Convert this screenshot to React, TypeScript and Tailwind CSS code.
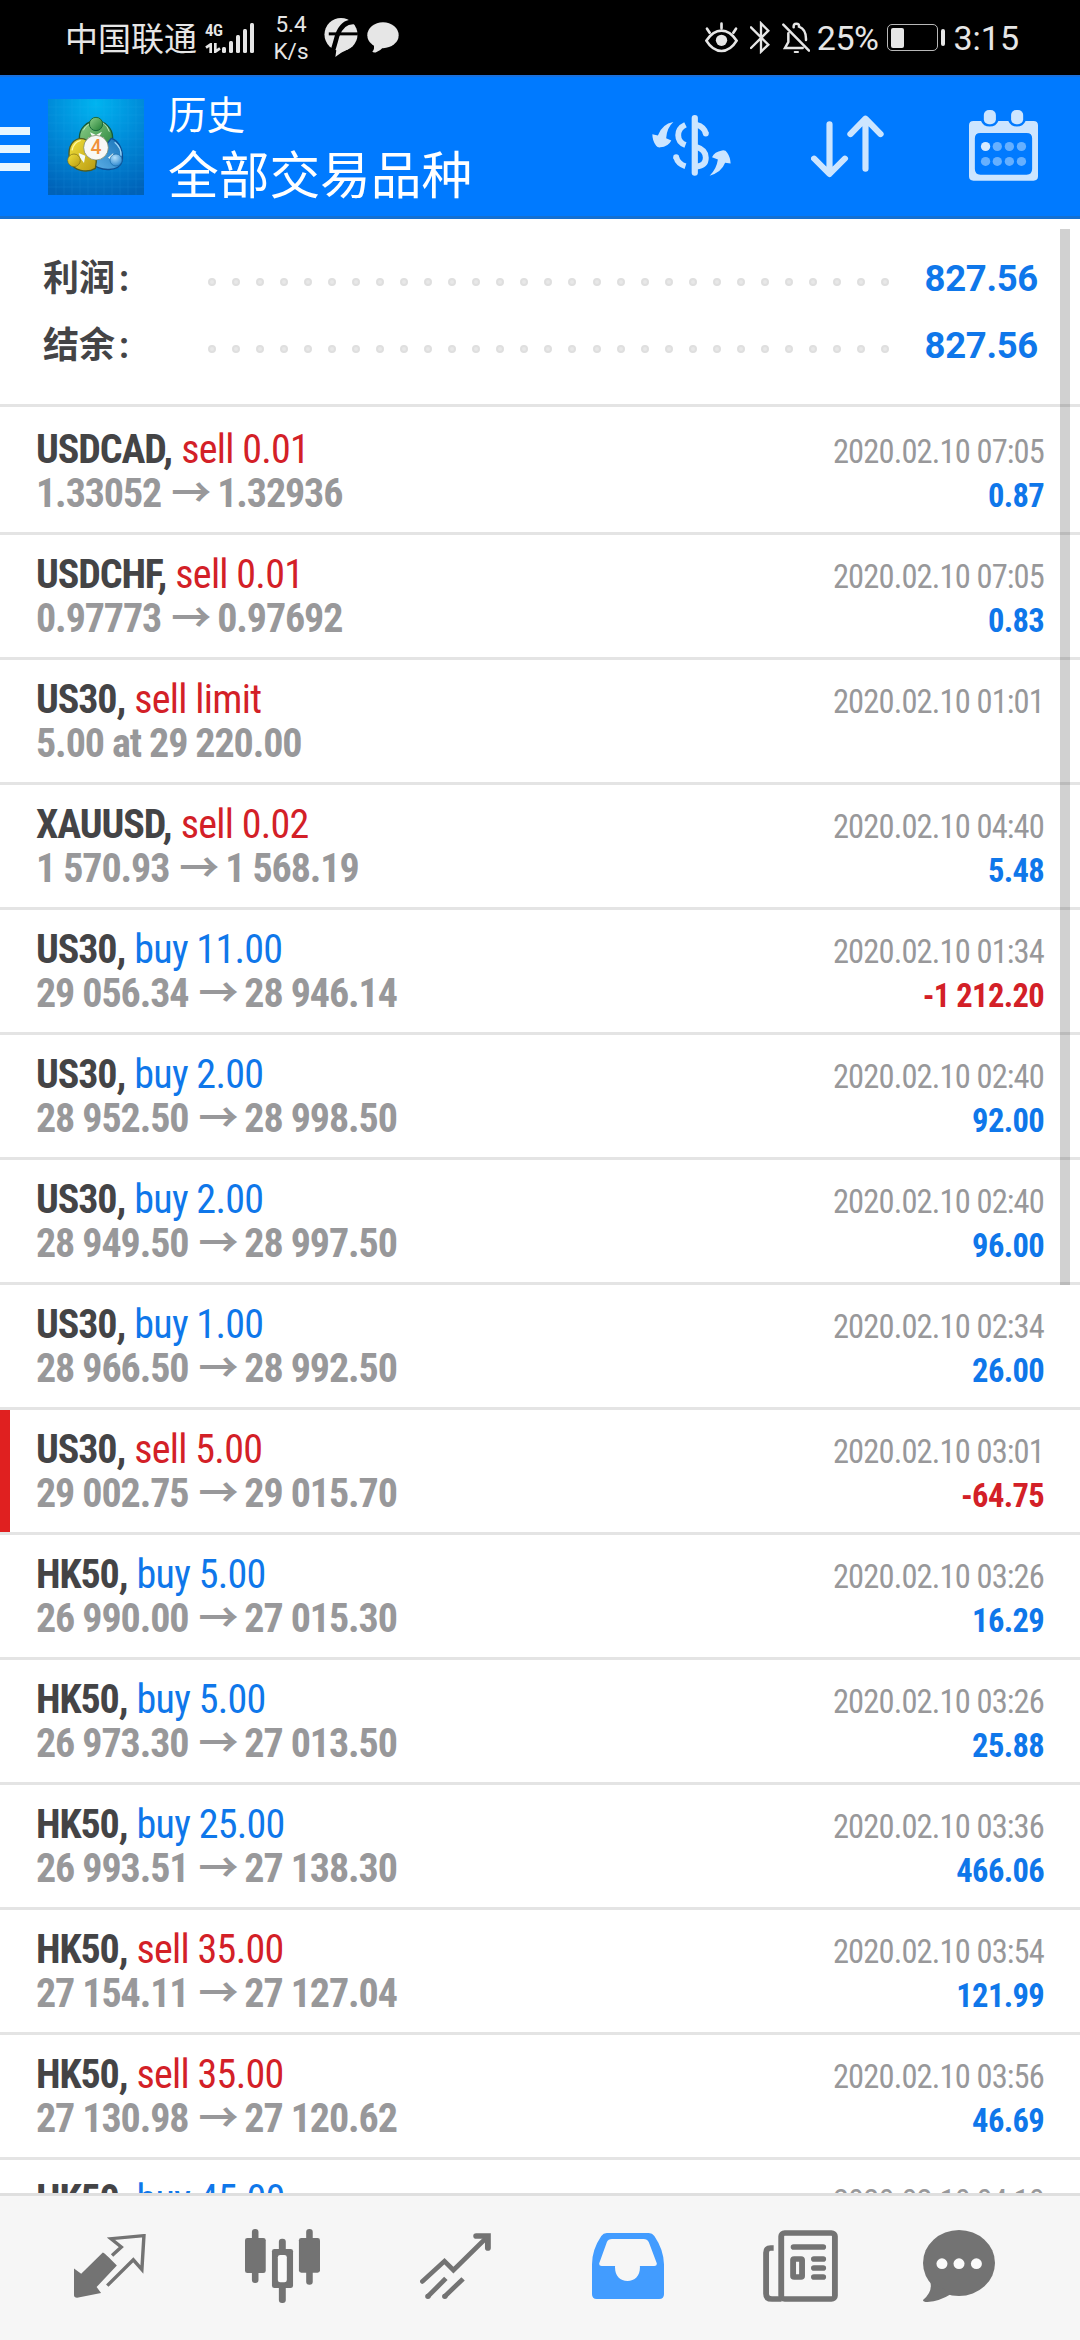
import type { ReactNode } from "react";

type Deal = {
  symbol: string;
  side: "buy" | "sell";
  label: string;
  from?: string;
  to?: string;
  note?: string;
  time: string;
  profit?: string;
  marked?: boolean;
};

const deals: Deal[] = [
  { symbol: "USDCAD", side: "sell", label: "sell 0.01", from: "1.33052", to: "1.32936", time: "2020.02.10 07:05", profit: "0.87" },
  { symbol: "USDCHF", side: "sell", label: "sell 0.01", from: "0.97773", to: "0.97692", time: "2020.02.10 07:05", profit: "0.83" },
  { symbol: "US30", side: "sell", label: "sell limit", note: "5.00 at 29 220.00", time: "2020.02.10 01:01" },
  { symbol: "XAUUSD", side: "sell", label: "sell 0.02", from: "1 570.93", to: "1 568.19", time: "2020.02.10 04:40", profit: "5.48" },
  { symbol: "US30", side: "buy", label: "buy 11.00", from: "29 056.34", to: "28 946.14", time: "2020.02.10 01:34", profit: "-1 212.20" },
  { symbol: "US30", side: "buy", label: "buy 2.00", from: "28 952.50", to: "28 998.50", time: "2020.02.10 02:40", profit: "92.00" },
  { symbol: "US30", side: "buy", label: "buy 2.00", from: "28 949.50", to: "28 997.50", time: "2020.02.10 02:40", profit: "96.00" },
  { symbol: "US30", side: "buy", label: "buy 1.00", from: "28 966.50", to: "28 992.50", time: "2020.02.10 02:34", profit: "26.00" },
  { symbol: "US30", side: "sell", label: "sell 5.00", from: "29 002.75", to: "29 015.70", time: "2020.02.10 03:01", profit: "-64.75", marked: true },
  { symbol: "HK50", side: "buy", label: "buy 5.00", from: "26 990.00", to: "27 015.30", time: "2020.02.10 03:26", profit: "16.29" },
  { symbol: "HK50", side: "buy", label: "buy 5.00", from: "26 973.30", to: "27 013.50", time: "2020.02.10 03:26", profit: "25.88" },
  { symbol: "HK50", side: "buy", label: "buy 25.00", from: "26 993.51", to: "27 138.30", time: "2020.02.10 03:36", profit: "466.06" },
  { symbol: "HK50", side: "sell", label: "sell 35.00", from: "27 154.11", to: "27 127.04", time: "2020.02.10 03:54", profit: "121.99" },
  { symbol: "HK50", side: "sell", label: "sell 35.00", from: "27 130.98", to: "27 120.62", time: "2020.02.10 03:56", profit: "46.69" },
  { symbol: "HK50", side: "buy", label: "buy 45.00", time: "2020.02.10 04:10" },
];

const summary = [
  { label: "利润", value: "827.56" },
  { label: "结余", value: "827.56" },
];

function StatusBar() {
  return (
    <div className="flex h-[75px] shrink-0 items-center bg-black pr-[61px] pl-[65px] text-[#e6e6e6]">
      <span className="font-['Noto_Sans_CJK_SC',sans-serif] text-[33px] leading-none">中国联通</span>
      <div className="ml-2 flex h-[30px] w-[17px] flex-col justify-between">
        <span className="font-['Roboto_Condensed',Roboto,sans-serif] text-[17px] leading-[14px] font-semibold tracking-[-0.500px]">4G</span>
        <svg width="16" height="10" viewBox="0 0 46 30" fill="none" stroke="currentColor" strokeWidth="8">
          <path d="M16 30V4L2 14M30 0v26l14-10" />
        </svg>
      </div>
      <svg width="33" height="30" viewBox="0 0 33 30" fill="currentColor">
        <rect x="0" y="24" width="4" height="6" rx="1.5" />
        <rect x="7" y="18" width="4" height="12" rx="1.5" />
        <rect x="14" y="12" width="4" height="18" rx="1.5" />
        <rect x="21" y="6" width="4" height="24" rx="1.5" />
        <rect x="28" y="0" width="4" height="30" rx="1.5" />
      </svg>
      <div className="ml-[18px] w-9 pt-px text-center font-[Roboto,sans-serif] text-[22.500px] leading-[27px]">
        <div>5.4</div>
        <div>K/s</div>
      </div>
      <svg className="ml-[15px]" width="34" height="39" viewBox="0 0 102 118" fill="currentColor">
        <circle cx="51" cy="50" r="50" />
        <path d="M42 60L34 118C50 104 62 100 76 92Z" />
        <path d="M94 12C62 8 48 30 40 52C34 72 30 92 20 116" fill="none" stroke="#000" strokeWidth="14" />
        <path d="M14 48H102" stroke="#000" strokeWidth="9" />
      </svg>
      <svg className="ml-[9px]" width="32" height="31" viewBox="0 0 96 92" fill="currentColor">
        <ellipse cx="48" cy="39" rx="47" ry="39" />
        <path d="M20 66Q24 80 16 88Q18 92 26 91Q40 86 48 76Z" />
      </svg>

      <svg className="ml-auto" width="33" height="31" viewBox="36 35 99 93" fill="none" stroke="currentColor" strokeWidth="8" strokeLinecap="round">
        <path d="M40 91Q60 61 85.500 61T131 91Q112 122 85.500 122T40 91Z" strokeLinejoin="round" />
        <circle cx="85.500" cy="90" r="17" fill="currentColor" stroke="none" />
        <path d="M85.500 40v14M42 55l8 12M129 55l-8 12" />
      </svg>
      <svg className="ml-[12px]" width="20" height="33" viewBox="170 31 60 99" fill="none" stroke="currentColor" strokeWidth="7" strokeLinecap="round">
        <path d="M173 50L225 102L203 123V38L225 60L173 112" />
      </svg>
      <svg className="ml-[12px]" width="28" height="32" viewBox="266 34 84 96" fill="none" stroke="currentColor" strokeWidth="7.500" strokeLinecap="round">
        <path d="M270 42L347 120M285 68V94L275 112H328M301 50Q300 39 309 39T317 48Q339 56 338 88" />
        <path d="M304 124H314" strokeWidth="6" />
      </svg>
      <span className="ml-[7px] font-[Roboto,sans-serif] text-[34px] leading-none tracking-[-0.5px]">25%</span>
      <div className="ml-[9px] flex h-[27px] w-[51px] items-center rounded-[5px] border-[1.5px] border-[#b8b8b8] pl-[3px]">
        <div className="h-5 w-[13px] rounded-[2px] bg-[#e6e6e6]" />
      </div>
      <div className="ml-[3px] h-[17px] w-1 rounded-[2px] bg-[#e6e6e6]" />
      <span className="ml-[8px] font-[Roboto,sans-serif] text-[34px] leading-none">3:15</span>
    </div>
  );
}

function AppLogo() {
  return (
    <svg className="ml-[18px] shrink-0" width="96" height="96" viewBox="24 24 288 288">
      <defs>
        <radialGradient id="sky" cx="0.5" cy="0.05" r="1">
          <stop offset="0" stopColor="#00b4f0" />
          <stop offset="0.500" stopColor="#008ad8" />
          <stop offset="1" stopColor="#0062b8" />
        </radialGradient>
        <linearGradient id="green" x1="0" y1="0" x2="1" y2="1">
          <stop offset="0" stopColor="#8fd08a" />
          <stop offset="1" stopColor="#1e7d34" />
        </linearGradient>
        <linearGradient id="yellow" x1="0" y1="0" x2="1" y2="1">
          <stop offset="0" stopColor="#f2e23c" />
          <stop offset="1" stopColor="#b99a12" />
        </linearGradient>
        <linearGradient id="blue" x1="1" y1="0" x2="0" y2="1">
          <stop offset="0" stopColor="#1672b8" />
          <stop offset="1" stopColor="#62b4ea" />
        </linearGradient>
        <radialGradient id="ball" cx="0.4" cy="0.3" r="0.8">
          <stop offset="0" stopColor="#b4e0fa" />
          <stop offset="1" stopColor="#2080cc" />
        </radialGradient>
      </defs>
      <rect x="24" y="24" width="288" height="288" fill="url(#sky)" />
      <path
        d="M48 24v288M72 24v288M96 24v288M120 24v288M144 24v288M168 24v288M192 24v288M216 24v288M240 24v288M264 24v288M288 24v288M24 48h288M24 72h288M24 96h288M24 120h288M24 144h288M24 168h288M24 192h288M24 216h288M24 240h288M24 264h288M24 288h288"
        stroke="#3cc4ff"
        strokeOpacity="0.150"
        strokeWidth="2"
      />
      <circle cx="168" cy="140" r="50" fill="url(#green)" stroke="#155a3a" strokeWidth="4" />
      <path d="M214 142C238 150 252 180 246 212C238 240 184 246 150 214L176 190Z" fill="url(#blue)" stroke="#0d4f94" strokeWidth="4" />
      <path d="M120 142C150 142 178 180 166 232C140 248 100 238 92 214C80 180 90 148 120 142Z" fill="url(#yellow)" stroke="#4f5c20" strokeWidth="4" />
      <path d="M130 118Q140 96 168 92T208 122" fill="none" stroke="#c4e8c0" strokeWidth="3" />
      <path d="M96 178Q100 154 122 148" fill="none" stroke="#fff8a0" strokeWidth="4" />
      <path d="M224 154Q244 170 243 194" fill="none" stroke="#9cd4f6" strokeWidth="4" />
      <path d="M150 124L168 132L186 122L176 140H158ZM116 186L136 194L132 216L120 200ZM204 200L220 186L216 208Z" fill="#f4fbf4" />
      <circle cx="168" cy="99" r="20" fill="url(#green)" stroke="#1a6a3c" strokeWidth="3" />
      <circle cx="102" cy="208" r="19" fill="url(#yellow)" stroke="#7a6a14" strokeWidth="2" />
      <circle cx="228" cy="207" r="18" fill="url(#ball)" stroke="#1768a8" strokeWidth="2" />
      <circle cx="168" cy="170" r="37" fill="#f8f8f6" stroke="#6c7c5c" strokeWidth="2" />
      <text x="168" y="190" textAnchor="middle" fontFamily="Roboto, sans-serif" fontSize="58" fontWeight="500" fill="#f0913a">
        4
      </text>
    </svg>
  );
}

function Header() {
  return (
    <header className="flex h-[144px] shrink-0 items-center border-t-2 border-b-[3px] border-t-[#1a70dc] border-b-[#1470d2] bg-[#007aff] pr-[42px]">
      <div className="flex flex-col gap-[10px] pt-[5px]">
        <div className="h-2 w-[30px] bg-[#e8f6ff]" />
        <div className="h-2 w-[30px] bg-[#e8f6ff]" />
        <div className="h-2 w-[30px] bg-[#e8f6ff]" />
      </div>
      <AppLogo />
      <div className="ml-6 pb-[9px] font-['Noto_Sans_CJK_SC',sans-serif] text-white">
        <div className="text-[38.500px] leading-[60px]">历史</div>
        <div className="text-[50.700px] leading-[60px]">全部交易品种</div>
      </div>

      <svg className="mb-[3px] ml-auto" width="79" height="61" viewBox="321 345 229 181" preserveAspectRatio="none" fill="#cce5ff">
        <rect x="436" y="345" width="18" height="180" rx="9" />
        <path d="M418 374Q397 384 397 405T418 434M391 470Q396 490 418 497" fill="none" stroke="#cce5ff" strokeWidth="17" />
        <circle cx="391" cy="470" r="8.500" />
        <path d="M450 374Q472 380 477 400M450 440Q477 448 477 472T450 498" fill="none" stroke="#cce5ff" strokeWidth="17" />
        <circle cx="477" cy="400" r="8.500" />
        <path d="M383 366Q364 383 362 414L377 421Q368 440 345 441Q337 442 333 436Q322 422 322 402L338 406Q350 372 383 366Z" />
        <path d="M488 525Q508 506 512 477L495 470Q502 454 524 450Q534 448 539 457Q548 470 549 489L533 487Q522 516 488 525Z" />
      </svg>
      <svg className="ml-[80px]" width="73" height="63" viewBox="782 344 213 191" preserveAspectRatio="none" fill="none" stroke="#cce5ff" strokeWidth="18" strokeLinecap="round">
        <path d="M836 372V520M791 476L836 523L881 476M941 507V358M897 402L941 355L985 402" strokeLinejoin="round" />
      </svg>
      <svg className="mb-[2px] ml-[85px]" width="69" height="71" viewBox="1243 330 200 214" preserveAspectRatio="none" fill="#cce5ff">
        <path
          fillRule="evenodd"
          d="M1256 363H1278Q1284 380 1303 380T1328 363H1357Q1364 380 1382 380T1407 363H1430Q1443 363 1443 376V530Q1443 543 1430 543H1256Q1243 543 1243 530V376Q1243 363 1256 363ZM1276 399Q1260 399 1260 415V508Q1260 525 1276 525H1410Q1426 525 1426 508V415Q1426 399 1410 399Z"
        />
        <rect x="1286" y="330" width="35" height="43" rx="15" />
        <rect x="1365" y="330" width="35" height="43" rx="15" />
        <circle cx="1291" cy="440" r="13.500" fill="#d6ebff" />
        <g fill="#66b0ff">
          <circle cx="1325" cy="440" r="13.500" />
          <circle cx="1360" cy="440" r="13.500" />
          <circle cx="1395" cy="440" r="13.500" />
          <circle cx="1291" cy="485" r="13.500" />
          <circle cx="1325" cy="485" r="13.500" />
          <circle cx="1360" cy="485" r="13.500" />
          <circle cx="1395" cy="485" r="13.500" />
        </g>
      </svg>
    </header>
  );
}

function Summary() {
  return (
    <section className="h-[188px] shrink-0 border-b-[3px] border-[#e4e4e4] pt-[26px] pr-[42px] pl-[43px] font-[Roboto,'Noto_Sans_CJK_SC',sans-serif] font-bold">
      {summary.map((item) => (
        <div key={item.label} className="flex h-[67px] items-center leading-[67px]">
          <span className="w-[165px] pt-[2px] text-[36px] text-[#444446]">
            {item.label}
            <span className="ml-[4px]">:</span>
          </span>
          <div className="mt-[6px] flex w-[681px] justify-between">
            {Array.from({ length: 29 }, (_, i) => (
              <span key={i} className="size-2 rounded-full border-2 border-[#dfdfdf] bg-[#e8e8e8]" />
            ))}
          </div>
          <span className="ml-auto text-[36.500px] tracking-[-0.300px] text-[#0f77ea]">{item.value}</span>
        </div>
      ))}
    </section>
  );
}

function DealRow({ deal }: { deal: Deal }) {
  const sideColor = deal.side === "buy" ? "text-[#0f77ea]" : "text-[#d32027]";
  const profitColor = deal.profit?.startsWith("-") ? "text-[#d32027]" : "text-[#0f77ea]";
  return (
    <li
      className={`h-[125px] shrink-0 border-b-[3px] border-[#e4e4e4] pt-[18px] pr-[36px] pl-9 text-[40px] leading-[44px] tracking-[-1.100px] ${
        deal.marked ? "shadow-[inset_10px_0_0_#e02020]" : ""
      }`}
    >
      <div className="flex h-11 items-baseline justify-between">
        <div className="whitespace-pre">
          <span className="font-bold text-[#444446]">{deal.symbol}, </span>
          <span className={`ml-[1px] tracking-[-0.700px] ${sideColor}`}>{deal.label}</span>
        </div>
        <span className="text-[32.500px] tracking-[-0.850px] text-[#98989a]">{deal.time}</span>
      </div>
      <div className="flex h-11 items-baseline justify-between font-bold">
        {deal.note && <span className="text-[#98989a]">{deal.note}</span>}
        {deal.from && (
          <span className="flex items-baseline text-[#98989a]">
            {deal.from}
            <span className="mr-[7px] ml-[10px] font-['Noto_Sans_CJK_SC',sans-serif] leading-[0]">→</span>
            {deal.to}
          </span>
        )}
        {deal.profit && <span className={`text-[32.500px] tracking-[-0.650px] ${profitColor}`}>{deal.profit}</span>}
      </div>
    </li>
  );
}

function Tab({ children }: { children: ReactNode }) {
  return <button className="flex w-[172.500px] items-center justify-center">{children}</button>;
}

function BottomNav() {
  return (
    <nav className="flex h-[147px] shrink-0 border-t-[3px] border-[#dfdfdf] bg-[#f6f6f6] pb-[5px] pl-6 text-[#737373]">
      <Tab>
        <svg width="72" height="64" viewBox="215 344 210 191" preserveAspectRatio="none" fill="currentColor">
          <path d="M299 399Q303 399 340 438L281 502L294 520L224 534Q215 534 215 527V447L236 463Z" />
          <path d="M326 408L353 383L323 358L419 349L413 450L388 421L312 498" fill="none" stroke="currentColor" strokeWidth="10" />
        </svg>
      </Tab>
      <Tab>
        <svg width="75" height="74" viewBox="709 327 217 222" preserveAspectRatio="none" fill="currentColor">
          <rect x="729" y="327" width="19" height="162" rx="9" />
          <rect x="709" y="354" width="60" height="105" rx="7" />
          <rect x="807" y="356" width="20" height="193" rx="9" />
          <rect x="787" y="387" width="61" height="117" rx="7" />
          <rect x="804" y="405" width="26" height="82" rx="7" fill="#fafafa" />
          <rect x="886" y="327" width="19" height="167" rx="9" />
          <rect x="865" y="354" width="61" height="104" rx="7" />
        </svg>
      </Tab>
      <Tab>
        <svg width="71" height="66" viewBox="1214 336 206 199" preserveAspectRatio="none" fill="none" stroke="currentColor" strokeWidth="14">
          <path d="M1221 482L1285 421L1311 448L1410 347" strokeLinecap="round" />
          <path d="M1377 345H1411V381" strokeWidth="17" strokeLinecap="round" />
          <path d="M1237 527L1289 473M1286 527L1339 474" />
          <path d="M1237 527h.1M1286 527h.1" strokeWidth="16" strokeLinecap="round" />
        </svg>
      </Tab>
      <Tab>
        <svg width="72" height="66" viewBox="147 336 209 198" preserveAspectRatio="none" fill="#429cff">
          <path
            fillRule="evenodd"
            d="M190 336H312Q322 336 328 345Q355 386 356 430V520Q356 534 342 534H161Q147 534 147 520V430Q147 386 174 345Q180 336 190 336ZM205 354Q194 354 190 364L168 427Q167 435 175 435H214C212 464 228 480 250 480S288 464 286 435H328Q336 435 335 427L312 364Q307 354 297 354Z"
          />
        </svg>
      </Tab>
      <Tab>
        <svg width="75" height="72" viewBox="646 327 218 216" preserveAspectRatio="none" fill="none" stroke="currentColor" strokeWidth="17">
          <rect x="699" y="336" width="156" height="198" rx="10" />
          <path d="M677 381H668Q655 381 655 395V518Q655 534 672 534H700" />
          <path d="M735 378H821M794 414H821M794 441H821M794 468H821" strokeLinecap="round" />
          <rect x="733.500" y="414" width="26" height="54" rx="3" />
        </svg>
      </Tab>
      <button className="flex w-36 items-center justify-center">
        <svg width="72" height="72" viewBox="1109 327 209 216" preserveAspectRatio="none" fill="currentColor">
          <ellipse cx="1213.500" cy="426" rx="104.500" ry="99" />
          <path d="M1130 482Q1138 512 1109 537Q1109 543 1122 543Q1158 540 1192 518Z" />
          <g fill="#fafafa">
            <circle cx="1164" cy="428" r="16" />
            <circle cx="1213.500" cy="428" r="16" />
            <circle cx="1264" cy="428" r="16" />
          </g>
        </svg>
      </button>
    </nav>
  );
}

export default function App() {
  return (
    <div className="flex h-[2340px] w-[1080px] flex-col overflow-hidden bg-white font-['Roboto_Condensed',Roboto,'Noto_Sans_CJK_SC',sans-serif]">
      <StatusBar />
      <Header />
      <main className="relative flex min-h-0 flex-1 flex-col overflow-hidden">
        <Summary />
        <ul className="flex flex-col pt-[3px]">
          {deals.map((deal, i) => (
            <DealRow key={i} deal={deal} />
          ))}
        </ul>
        {/* scroll thumb */}
        <div className="absolute top-[10px] right-[10px] h-[1056px] w-[10px] bg-black/18" />
      </main>
      <BottomNav />
    </div>
  );
}
